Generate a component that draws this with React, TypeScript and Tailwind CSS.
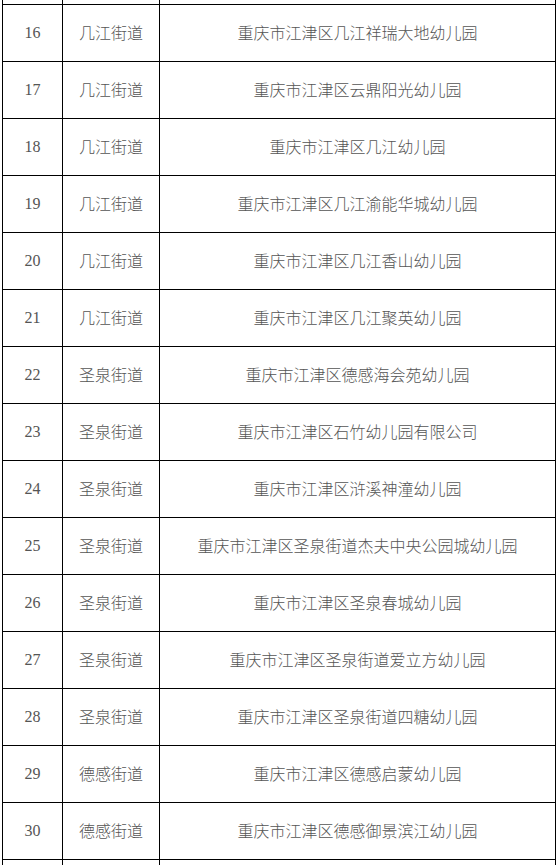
const rows: [number, string, string][] = [
  [16, "几江街道", "重庆市江津区几江祥瑞大地幼儿园"],
  [17, "几江街道", "重庆市江津区云鼎阳光幼儿园"],
  [18, "几江街道", "重庆市江津区几江幼儿园"],
  [19, "几江街道", "重庆市江津区几江渝能华城幼儿园"],
  [20, "几江街道", "重庆市江津区几江香山幼儿园"],
  [21, "几江街道", "重庆市江津区几江聚英幼儿园"],
  [22, "圣泉街道", "重庆市江津区德感海会苑幼儿园"],
  [23, "圣泉街道", "重庆市江津区石竹幼儿园有限公司"],
  [24, "圣泉街道", "重庆市江津区浒溪神潼幼儿园"],
  [25, "圣泉街道", "重庆市江津区圣泉街道杰夫中央公园城幼儿园"],
  [26, "圣泉街道", "重庆市江津区圣泉春城幼儿园"],
  [27, "圣泉街道", "重庆市江津区圣泉街道爱立方幼儿园"],
  [28, "圣泉街道", "重庆市江津区圣泉街道四糖幼儿园"],
  [29, "德感街道", "重庆市江津区德感启蒙幼儿园"],
  [30, "德感街道", "重庆市江津区德感御景滨江幼儿园"],
];

const cjk = "font-['Microsoft_YaHei','Noto_Sans_CJK_SC',sans-serif] font-light";

function Row({ n, street, name, h }: { n?: number; street?: string; name?: string; h: string }) {
  return (
    <div className={`grid grid-cols-[60px_97px_396px] border-b border-black ${h}`}>
      <div className="flex items-center justify-center border-r border-black pb-[1px] font-['Liberation_Serif',serif] text-[16px] text-[#555]">
        {n}
      </div>
      <div className={`flex items-center justify-center border-r border-black pb-[2px] text-[16px] text-[#555] ${cjk}`}>
        {street}
      </div>
      <div className={`flex items-center justify-center border-r border-black pb-[2px] text-[16px] text-[#555] ${cjk}`}>
        {name}
      </div>
    </div>
  );
}

export default function App() {
  return (
    <div className="h-[865px] w-[559px] overflow-hidden bg-white">
      <div className="ml-[2px] w-[554px] border-l border-black">
        <Row h="h-[5px]" />
        {rows.map(([n, street, name]) => (
          <Row key={n} n={n} street={street} name={name} h="h-[57px]" />
        ))}
        <Row h="h-[57px]" />
      </div>
    </div>
  );
}
